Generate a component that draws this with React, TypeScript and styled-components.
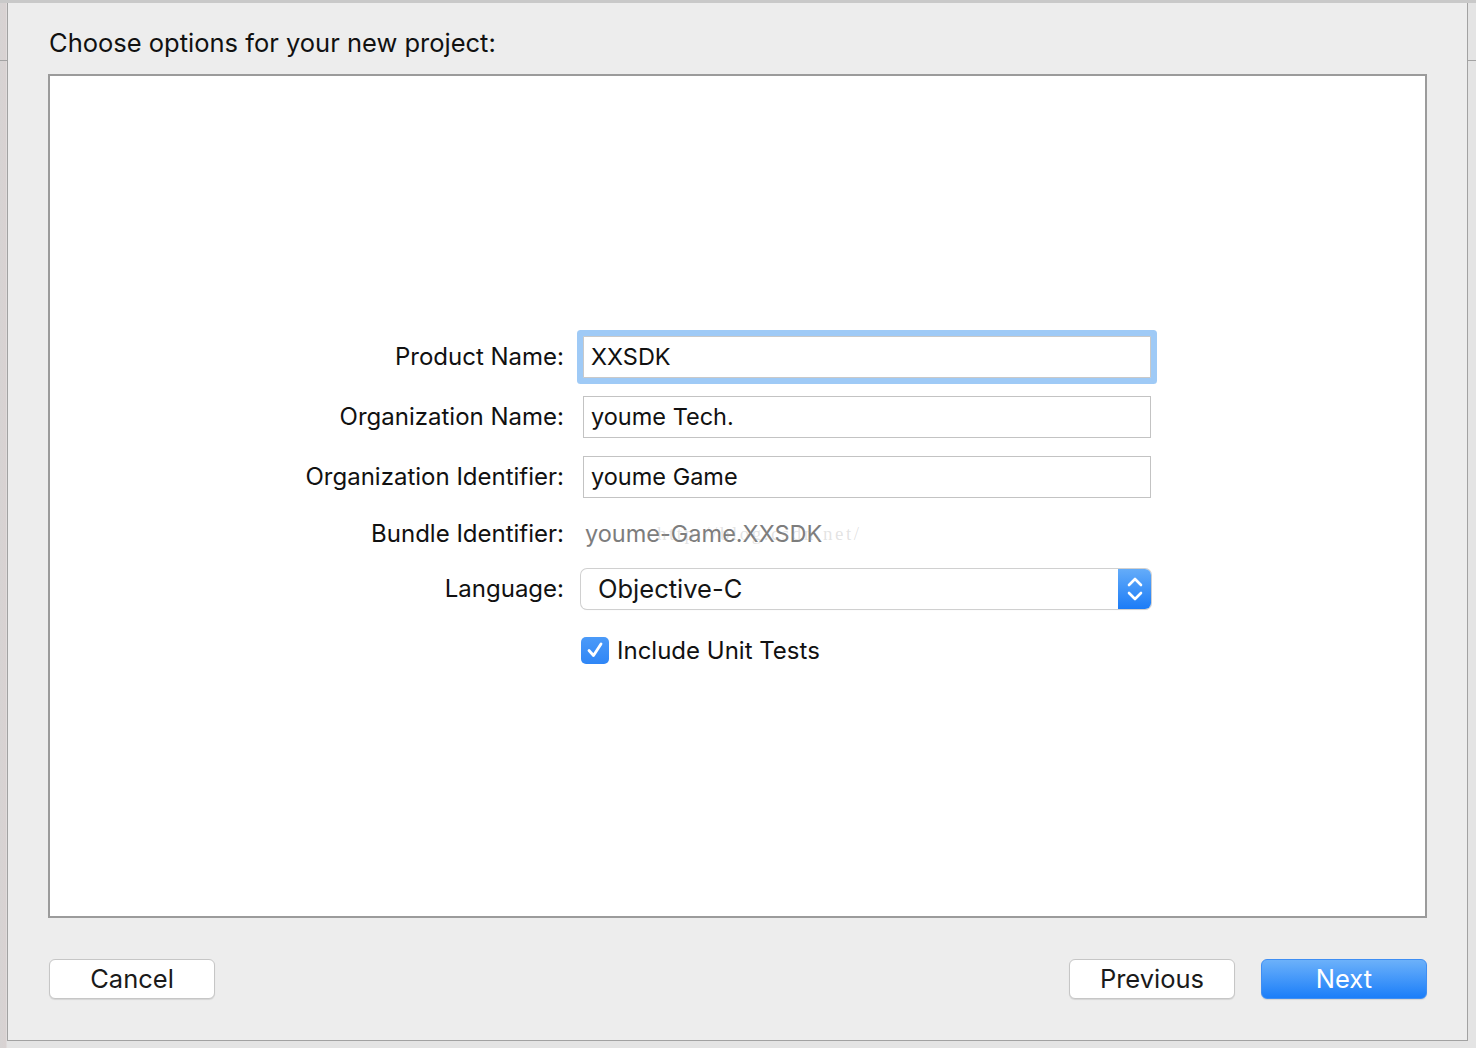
import React from 'react';
import styled, { createGlobalStyle, css } from 'styled-components';

const GlobalStyle = createGlobalStyle`
  html, body {
    margin: 0;
    padding: 0;
    width: 1476px;
    height: 1048px;
    overflow: hidden;
  }
  body {
    font-family: Inter, Roboto, "Liberation Sans", sans-serif;
    color: #1d1d1d;
  }
`;

const Desktop = styled.div`
  box-sizing: border-box;
  width: 1476px;
  height: 1048px;
  padding: 3px 8px 7px 7px;
  display: flex;
  background:
    linear-gradient(to bottom, transparent 60px, #a3a3a3 60px, #a3a3a3 61px, transparent 61px),
    linear-gradient(to right, #d6d3d3 0, #d9d2d2 6px, #e4e4e4 7px);
  box-shadow: inset 0 3px 0 #c9c9c9;
`;

const Sheet = styled.div`
  flex: 1;
  display: flex;
  flex-direction: column;
  box-sizing: border-box;
  background: #ededed;
  border-left: 1px solid #a2a2a2;
  border-right: 1px solid #a2a2a2;
  border-bottom: 1px solid #a2a2a2;
  padding: 25px 40px 0 40px;
`;

const Title = styled.h1`
  margin: 0 0 16px 1px;
  font-size: 25.5px;
  line-height: 30px;
  font-weight: 400;
  color: #111;
`;

const Panel = styled.div`
  height: 844px;
  box-sizing: border-box;
  background: #fff;
  border: 2px solid #9b9b9b;
  display: flex;
  align-items: center;
`;

const Form = styled.div`
  display: grid;
  grid-template-columns: 514px 570px;
  column-gap: 17px;
  row-gap: 18px;
  align-items: center;
  margin-top: 8px;
`;

const Label = styled.div`
  text-align: right;
  font-size: 24px;
  color: #111;
  white-space: nowrap;
`;

const Field = styled.div<{ $focused?: boolean }>`
  box-sizing: border-box;
  height: 42px;
  margin-left: 2px;
  width: 568px;
  display: flex;
  align-items: center;
  padding-left: 7px;
  background: #fff;
  border: 1px solid #c3c3c3;
  font-size: 23.5px;
  color: #111;

  ${({ $focused }) =>
    $focused &&
    css`
      border-color: #c9c9c9;
      box-shadow: 0 0 0 6px #9fcaf6;
      border-radius: 1px;
    `}
`;

const StaticValue = styled.div`
  position: relative;
  height: 35px;
  display: flex;
  align-items: center;
  padding-left: 4px;
  font-size: 23.5px;
  color: #7d7d7d;
`;

const Watermark = styled.span`
  position: absolute;
  left: 76px;
  top: 7px;
  font-family: "Liberation Serif", serif;
  font-size: 19px;
  letter-spacing: 2.5px;
  color: rgba(160, 160, 160, 0.3);
  pointer-events: none;
`;

const Popup = styled.div`
  box-sizing: border-box;
  height: 40px;
  width: 570px;
  display: flex;
  align-items: stretch;
  background: #fff;
  border-radius: 6px;
  box-shadow: 0 0 0 1px #d0d0d0, 0 1px 1px rgba(0, 0, 0, 0.12);
  overflow: hidden;
`;

const PopupText = styled.div`
  flex: 1;
  display: flex;
  align-items: center;
  padding-left: 17px;
  font-size: 25.5px;
  color: #151515;
`;

const PopupArrows = styled.div`
  width: 33px;
  display: flex;
  align-items: center;
  justify-content: center;
  background: linear-gradient(to bottom, #64acf9, #1c7cf7);
`;

const CheckRow = styled.div`
  grid-column: 2;
  display: flex;
  align-items: center;
  gap: 8px;
  margin-top: 9px;
  font-size: 24px;
  color: #111;
`;

const CheckBox = styled.div`
  width: 28px;
  height: 27px;
  border-radius: 5px;
  background: linear-gradient(to bottom, #4b9af8, #2f86f6);
  display: flex;
  align-items: center;
  justify-content: center;
`;

const Footer = styled.div`
  display: flex;
  align-items: center;
  padding: 41px 0 0 1px;
  gap: 26px;
`;

const Spacer = styled.div`
  flex: 1;
`;

const Button = styled.button<{ $primary?: boolean }>`
  width: 166px;
  height: 40px;
  border-radius: 6px;
  font-family: inherit;
  font-size: 25.5px;
  padding: 0 0 1px;
  cursor: pointer;
  background: #fff;
  color: #1a1a1a;
  border: 1px solid #c6c6c6;
  box-shadow: 0 1px 1px rgba(0, 0, 0, 0.1);

  ${({ $primary }) =>
    $primary &&
    css`
      color: #fff;
      border-color: #3f8ef3;
      background: linear-gradient(to bottom, #6cb1fa, #1b7ef9);
    `}
`;

const Chevrons = () => (
  <svg width="18" height="28" viewBox="0 0 18 28">
    <path d="M3 10 L9 4 L15 10" fill="none" stroke="#fff" strokeWidth="2.6" strokeLinecap="round" strokeLinejoin="round" />
    <path d="M3 18 L9 24 L15 18" fill="none" stroke="#fff" strokeWidth="2.6" strokeLinecap="round" strokeLinejoin="round" />
  </svg>
);

const CheckMark = () => (
  <svg width="20" height="20" viewBox="0 0 20 20">
    <path d="M4 10.5 L8.5 15.5 L16 4" fill="none" stroke="#fff" strokeWidth="2.8" strokeLinecap="round" strokeLinejoin="round" />
  </svg>
);

export default function App() {
  return (
    <>
      <GlobalStyle />
      <Desktop>
        <Sheet>
          <Title>Choose options for your new project:</Title>
          <Panel>
            <Form>
              <Label>Product Name:</Label>
              <Field $focused>XXSDK</Field>

              <Label>Organization Name:</Label>
              <Field>youme Tech.</Field>

              <Label>Organization Identifier:</Label>
              <Field>youme Game</Field>

              <Label>Bundle Identifier:</Label>
              <StaticValue>
                youme-Game.XXSDK
                <Watermark>http://blog.csdn.net/</Watermark>
              </StaticValue>

              <Label>Language:</Label>
              <Popup>
                <PopupText>Objective-C</PopupText>
                <PopupArrows>
                  <Chevrons />
                </PopupArrows>
              </Popup>

              <CheckRow>
                <CheckBox>
                  <CheckMark />
                </CheckBox>
                Include Unit Tests
              </CheckRow>
            </Form>
          </Panel>
          <Footer>
            <Button>Cancel</Button>
            <Spacer />
            <Button>Previous</Button>
            <Button $primary>Next</Button>
          </Footer>
        </Sheet>
      </Desktop>
    </>
  );
}
